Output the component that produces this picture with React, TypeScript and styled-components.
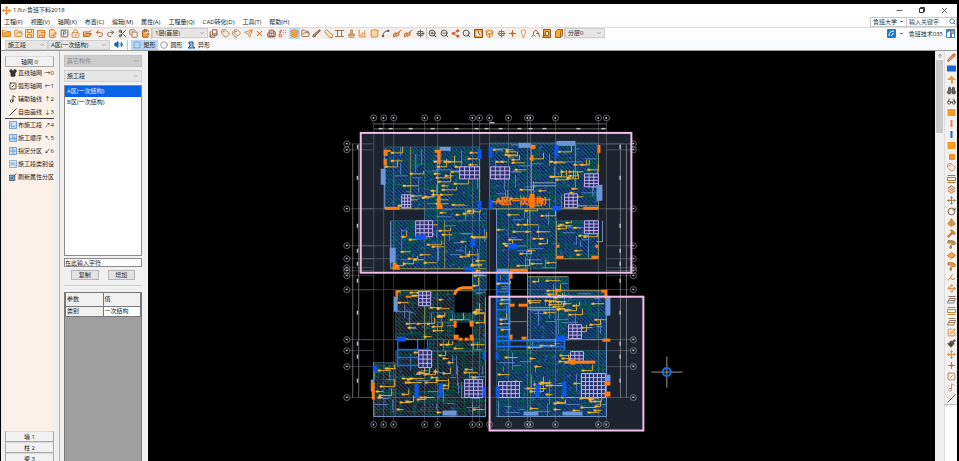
import React from "react";
import styled, { createGlobalStyle, css } from "styled-components";
import {
  Folder, FolderOpen, Save, FilePenLine, SquareParking, LockKeyhole, Brush, Undo2, Redo2, Scissors, Copy,
  ClipboardPaste, BookCopy, Tag, Tags, Send, X, Building2, Replace, Layers, Stamp, ChartColumnIncreasing,
  Cylinder, Spline, SquareDashed, ZoomIn, ZoomOut, Share2, Search, PackageOpen, Move,
  Lightbulb, Frame, Binoculars, Glasses, Settings, RotateCw, PaintRoller, Paintbrush,
  Pyramid, ArrowUp, Hammer, Waypoints, SquarePen, Slash, Volume2, Circle,
  Minus, ChevronDown, Pencil, Music2, SquareSlash, Shirt,
} from "lucide-react";

const Global = createGlobalStyle`
  * { box-sizing: border-box; }
  html, body { margin: 0; height: 100%; background: #000; overflow: hidden; }
  #root { height: 100vh; }
  body, button, input, select, table {
    font-family: "Open Sans", "Noto Sans CJK SC", sans-serif;
    font-size: 6px; line-height: 8px; color: #222;
  }
  button, input, select { margin: 0; padding: 0; border: 0; background: none; border-radius: 0; }
`;

const Window = styled.div`
  display: flex; flex-direction: column; height: 100vh;
  padding: 4px 2px 0 1px; background: #000;
`;
const TitleBar = styled.header`
  display: flex; align-items: center; justify-content: space-between;
  height: 12px; flex: none; background: #fff; padding: 0 8px 0 1px;
`;
const Title = styled.h1`
  display: flex; align-items: center; gap: 2px; margin: 0;
  font-size: 6px; font-weight: 400; line-height: 10px;
`;
const WindowControls = styled.div`display: flex; gap: 14px;`;
const PlainButton = styled.button`display: flex; align-items: center; justify-content: center;`;
const MenuBar = styled.nav`
  display: flex; align-items: center; height: 11px; flex: none;
  background: #fdfdfe; padding-left: 3px; gap: 8px;
`;
const MenuItem = styled.button`white-space: nowrap;`;
const SearchBox = styled.form`
  display: flex; align-items: center; width: 87px; height: 10px; margin-left: auto;
  border: 1px solid #c8c8c8; background: #fff;
`;
const SearchScope = styled.button`
  display: flex; align-items: center; gap: 2px; width: 36px; padding-left: 2px;
  white-space: nowrap; border-right: 1px solid #c8c8c8;
`;
const SearchInput = styled.input`
  flex: 1; min-width: 0; padding-left: 2px; outline: 0; height: 8px;
  &::placeholder { color: #444; }
`;
const Strip = styled.div`
  display: flex; align-items: center; height: 12px; flex: none;
  background: #fdfdfe; border-top: 1px solid #dcdcdc;
`;
const ToolStrip = styled.div`
  display: flex; height: 12px; background: #f2efec; border-bottom: 1px solid #c9c9c9; align-items: center;
`;
const ToolGroup = styled.div<{ $width: number }>`
  display: flex; align-items: center; justify-content: space-around; width: ${p => p.$width}px; height: 11px;
  border-right: 1px solid #c4c4c4;
`;
const ToolButton = styled.button<{ $active?: boolean }>`
  display: flex; align-items: center; justify-content: center; width: 11px; height: 11px;
  ${p => p.$active && css`background: #b9d8f5;`}
`;
const Account = styled.div`
  display: flex; align-items: center; gap: 3px; margin-left: auto; padding-right: 2px; white-space: nowrap;
`;
const AccountName = styled.span`margin-left: 2px;`;
const OptionStrip = styled.div`
  display: flex; align-items: center; height: 12px; flex: none; padding-left: 4px;
  background: #f8fafd; border-bottom: 1px solid #9a9a9a;
`;
const SelectFrame = styled.label<{ $width?: number; $dim?: boolean; $tall?: boolean }>`
  position: relative; display: flex; align-items: center;
  width: ${p => (p.$width ? p.$width + "px" : "100%")}; height: ${p => (p.$tall ? 12 : 10)}px;
  border: 1px solid ${p => (p.$dim ? "#c4c4c4" : "#d0d0d0")};
  background: ${p => (p.$dim ? "#cccccc" : "#e6e6e6")};
  svg { position: absolute; right: 2px; pointer-events: none; }
  select {
    appearance: none; width: 100%; height: 8px; padding-left: 2px; outline: 0; opacity: 1;
    color: ${p => (p.$dim ? "#8c8c8c" : "#222")};
  }
`;
const ShapeButton = styled.button<{ $active?: boolean }>`
  display: flex; align-items: center; justify-content: center; gap: 2px; width: 27px; height: 10px; white-space: nowrap;
  background: ${p => (p.$active ? "#b7d6f5" : "transparent")};
`;
const VolumeButton = styled(PlainButton)`width: 18px; height: 10px; border-right: 1px solid #c4c4c4; margin-right: 3px;`;
const Body = styled.div`display: flex; flex: 1; min-height: 0; background: #f0f0f0;`;
const ToolTree = styled.aside`
  display: flex; flex-direction: column; width: 59px; flex: none; padding: 5px 5px 0 4px;
  border-right: 1px solid #b0b0b0; overflow: hidden;
`;
const GroupButton = styled.button`
  height: 11px; flex: none; border: 1px solid #a9a9a9; border-top-color: #d8d8d8; background: #f1f1f1;
`;
const TreeList = styled.ul`
  flex: 1; min-height: 0; list-style: none; margin: 0; padding: 0; background: #fcf1e8;
`;
const TreeItem = styled.li<{ $rule?: boolean }>`
  height: 13px; border-bottom: 1px solid ${p => (p.$rule ? "#444" : "transparent")};
`;
const TreeButton = styled.button`
  display: flex; align-items: center; gap: 1px; width: 100%; height: 12px; padding-left: 4px; white-space: nowrap;
  svg { flex: none; }
`;
const Shortcut = styled.span`margin-left: auto;`;
const GroupStack = styled.div`
  display: flex; flex-direction: column; height: 30px; overflow: hidden; flex: none;
`;
const Properties = styled.aside`
  display: flex; flex-direction: column; width: 88px; flex: none; padding: 4px 5px 0 4px;
  border-right: 1px solid #fafafa;
`;
const SelectStack = styled.div`display: flex; flex-direction: column; gap: 3px;`;
const ZoneList = styled.ul`
  list-style: none; margin: 3px 0 2px; padding: 0; height: 171px; flex: none; background: #fff; border: 1px solid #8a8a8a;
`;
const Zone = styled.li<{ $selected?: boolean }>`
  height: 11px; padding: 1px 2px;
  background: ${p => (p.$selected ? "#0a63e6" : "transparent")}; color: ${p => (p.$selected ? "#e6f0ff" : "#222")};
`;
const FilterInput = styled.input`
  height: 9px; width: 100%; border: 1px solid #8a8a8a; background: #fff; flex: none;
  &::placeholder { color: #222; }
`;
const Actions = styled.div`
  display: flex; gap: 9px; padding: 3px 7px 5px; border-bottom: 1px solid #cfcfcf;
`;
const ActionButton = styled.button`
  flex: 1; height: 10px; border: 1px solid #b5b5b5; background: #e3e3e3;
`;
const GridPanel = styled.div`
  flex: 1; margin-top: 6px; background: #9f9f9f; border: 1px solid #777; border-bottom: 0;
`;
const ParamTable = styled.table`
  width: 100%; border-collapse: collapse; table-layout: fixed;
  th, td { text-align: left; font-weight: 400; border: 1px solid #777; padding: 0 1px; background: #f0f0f0; }
  thead th { height: 13px; border-top: 0; }
  tbody td, tbody th { height: 10px; }
  td { background: #fff; }
`;
const Viewport = styled.main`
  flex: 1; min-width: 0; background: #000; overflow: hidden;
  svg { display: block; width: 100%; height: 100%; }
`;
const ScrollTrack = styled.div`
  width: 9px; flex: none; background: #efefef; display: flex; flex-direction: column; align-items: stretch;
`;
const ScrollArrow = styled(PlainButton)`height: 9px; flex: none;`;
const ScrollThumb = styled.div`height: 73px; background: #c9c9c9; margin: 0 1px;`;
const SideTools = styled.aside`
  display: flex; flex-direction: column; width: 13px; flex: none; background: #fff; border-left: 1px solid #ddd;
`;
const SideButtons = styled.div`
  display: flex; flex-direction: column; align-items: center; background: #f3f1ef; border-bottom: 1px solid #bbb; padding-top: 1px;
`;

type IconType = React.ComponentType<any>;
type Tool = [IconType, string, string, string?];
const O = "#d8852f", G = "#6d6259", K = "#4a4440", B = "#2f6fc0", F = "#f5a73c", N = "none";

/* Small pictograms on a 9-unit grid, painted with a stroke and an optional fill. */
const glyph = (lines: string, solid?: string): IconType => ({ size = 9, color, fill }: any) => (
  <svg width={size} height={size} viewBox="0 0 9 9" fill="none">
    {solid && <path d={solid} fill={fill === N ? color : fill} />}
    <path d={lines} stroke={color} />
  </svg>
);
const FullFolder = glyph("M0.5 7.5V1.5H3.5L4.5 2.5H8.5V7.5Z", "M0.5 7.5V3H8.5V7.5Z");
const Disk = glyph("M0.5 0.5H8.5V8.5H0.5ZM2.5 8V5.5H6.5V8M2.5 1V3.5H6.5V1", "M0.5 0.5H8.5V8.5H0.5Z");
const DiskArrow = glyph("M0.5 1.5H7.5V8.5H0.5ZM2.5 8V6H5.5V8M4 3.5H8.5M6.5 1.5L8.5 3.5L6.5 5.5", "M0.5 1.5H7.5V8.5H0.5Z");
const FolderBrush = glyph("M0.5 7.5V3H6L8.5 1.5M0.5 7.5H6.5L8.5 4.5H2.5Z", "M0.5 7.5H6.5L8.5 4.5H2.5Z");
const IBeam = glyph("M0 1.5H9M0 7.5H9M2.5 1.5V7.5M6.5 1.5V7.5");
const DiagonalBar = glyph("M0.5 2.5L2.5 0.5L8.5 6L8.5 8.5L5.5 8.5Z", "M1 2.5L2.5 1L8 6V8H5.5Z");
const JoinBar = glyph("M0.5 8V5L3 3.5V6.5ZM3 5L6 3V6L3 7.5M5.5 3L8.5 1", "M0.5 8V5L6 3V6Z");
const Cross = glyph("M4.5 0.5V8.5M0.5 4.5H8.5M2 2.5H7V6.5H2Z");
const Spark = glyph("M4.5 1V8M1 4.5H8", "M4.5 2.5L6.5 4.5L4.5 6.5L2.5 4.5Z");
const Fit = glyph("M0.5 0.5H8.5V8.5H0.5ZM4.5 2V4L6 6", "M0.5 0.5H8.5V8.5H0.5ZM4.5 2A2.5 2.5 0 1 0 4.5 7A2.5 2.5 0 1 0 4.5 2Z");
const Crane = glyph("M0.5 8L2.5 5.5L4.5 7.5M2.5 5.5V3L5 1L7.5 4L8.5 8M5 4.5H8");
const PlanFrame = glyph("M1.5 0.5H8.5V8.5H1.5ZM0 8.5L3 6M3.5 2.5H6.5V6.5H3.5Z", "M1.5 0.5H8.5V8.5H1.5ZM3.5 2.5V6.5H6.5V2.5Z");
const Cube = glyph("M1.5 2.5L3.5 0.5H8.5V6.5L6.5 8.5H1.5ZM6.5 2.5V8.5M6.5 2.5L8.5 0.5", "M1.5 2.5L3.5 0.5H8.5V6.5L6.5 8.5H1.5Z");
const LongSheet = glyph("M0.5 1.5H8.5M0.5 3.5H8.5V6.5H0.5ZM0.5 8.5H8.5");
const SlantSheet = glyph("M1.5 1.5H8.5M2.5 3.5H8.5L6.5 8H0.5ZM1.5 5.5H7.5");
const FlagArrow = glyph("M1 7.5L3.5 4.5L5 6.5L8 5.5M3.5 4.5L5.5 1.5");
const Donut = glyph("M0.5 4.5L4.5 1.5L8.5 4.5L4.5 7.5Z", "M1 4.5L4.5 2L8 4.5L4.5 7Z");
const FlatBlue = glyph("M0 0", "M0 1.5H9V7.5H0Z");
const Block = glyph("M0 0", "M0.5 1H8.5V8H0.5Z");
const SmallBlock = glyph("M0 0", "M2 2H8V8H2Z");
const Bar = glyph("M0 0", "M3.5 1H5.5V8H3.5Z");
const RoofArrow = glyph("M0 0", "M0 5L4.5 0.5L9 5H6V8.5H4V5Z");
const TileEdge = glyph("M0.5 0.5H8.5V8.5H0.5ZM2.5 2.5V6.5H7", "M0.5 0.5H8.5V8.5H0.5Z");
const TileOrder = glyph("M0.5 0.5H8.5V8.5H0.5ZM4.5 1V5.5M1 5.5H8M6.5 3V7", "M0.5 0.5H8.5V8.5H0.5Z");
const TileSplit = glyph("M0.5 0.5H8.5V8.5H0.5ZM4.5 1V8M1 4.5H8", "M0.5 0.5H8.5V8.5H0.5Z");
const TileType = glyph("M0.5 0.5H8.5V8.5H0.5ZM2.5 6V3L4.5 5.5V2.5M6.5 3V7", "M0.5 0.5H8.5V8.5H0.5Z");
const BoxPen = glyph("M0.5 2.5H6.5V8.5H0.5ZM3 6L8.5 0.5M2.5 4.5V6.5H5", "M0.5 2.5H6.5V8.5H0.5Z");

const fileTools: Tool[] = [
  [FullFolder, "新建", O, F], [FolderOpen, "打开", O, "#fde0b8"], [Disk, "保存", O, "#fbdcb0"], [DiskArrow, "另存为", O, "#f9cd92"], [FilePenLine, "编辑", "#c46f22", "#fbdcb0"],
  [SquareParking, "打印", G], [LockKeyhole, "锁定", O], [FolderBrush, "格式", "#bb6b28", F], [Undo2, "撤销", "#b5622a"], [Redo2, "恢复", G],
  [Scissors, "剪切", K], [Copy, "复制", "#a06c3c"], [ClipboardPaste, "粘贴", "#8d4c18", F],
];
const editTools: Tool[] = [
  [BookCopy, "属性", "#87472c"], [Tag, "标注", "#a87445"], [Tags, "批量标注", "#a87445"], [Send, "定位", O], [X, "删除", "#bd5a28"],
  [Building2, "楼层", "#874a31"], [Replace, "替换", "#b8653a"], [Layers, "构件", O, F], [FolderOpen, "图层", "#96683c"], [Brush, "刷新", G, O],
  [DiagonalBar, "斜梁", O, "#fbe0bd"], [IBeam, "框架", "#9c7350"], [Stamp, "支座", "#b87a45", "#e5bd90"], [ChartColumnIncreasing, "图表", O], [Cylinder, "柱", O, "#f6d3a5"],
  [Spline, "偏移", K], [JoinBar, "延伸", "#c4703a", "#f0b98c"], [JoinBar, "修剪", "#c4703a", "#f0b98c"], [Cross, "平移", G],
];
const viewTools: Tool[] = [
  [ZoomIn, "放大", K], [ZoomOut, "缩小", K], [Share2, "动态", "#c25a2f", "#df7340"], [Search, "窗口", K], [Fit, "全部", "#85511d", F],
  [PackageOpen, "转换", O], [Cross, "网格", "#9d7048"], [Spark, "移动", "#c56b2d"], [Lightbulb, "显示", "#d9953d"],
  [Crane, "路径", "#a3604a"], [PlanFrame, "平面", "#8a5a20", F], [Cube, "三维", "#a8681a", "#f9ac23"],
];
const sideTools: Tool[] = [
  [Pencil, "绘制", "#b3532c", "#e9a27b"], [FlatBlue, "板", "#1f64d6"], [RoofArrow, "屋面", "#ef9b3d"], [Binoculars, "查找", K, "#777"], [Glasses, "查看", K],
  [Block, "墙", "#f59b20"], [Bar, "钢筋", "#ec7f5a"], [Bar, "纵筋", "#2867ae"], [Block, "梁", "#f59b20"], [SmallBlock, "柱", "#ef9425"], [Tag, "标签", "#b58450"],
  [LongSheet, "列表", "#a9783e"], [Settings, "设置", "#a86836"], [Move, "移动", "#a5764d"], [RotateCw, "旋转", "#675034"], [Pyramid, "镜像", O, "#ca9c63"],
  [Hammer, "锤", "#ae762c", O], [PaintRoller, "刷", "#8f7240", "#c4a05c"], [Donut, "节点", "#b86d22", F], [PaintRoller, "填充", "#b86d22", F], [FlagArrow, "曲线", "#c4703a"],
  [Waypoints, "折线", O], [SlantSheet, "表格", "#8d766c"], [LongSheet, "明细", "#c88938"], [SlantSheet, "报表", "#a07a5f"], [SquarePen, "修改", O],
  [Paintbrush, "涂刷", G, K], [Move, "拖动", O], [Spark, "平移", "#9b8268"], [SquareSlash, "分割", "#b97b42"], [Music2, "引线", "#b99a75"], [Slash, "直线", K],
];

const ToolIcons = ({ tools, active }: { tools: Tool[]; active?: number }) => (
  <>
    {tools.map(([Icon, label, color, fill], i) => (
      <ToolButton key={label} type="button" aria-label={label} $active={i === active}>
        <Icon size={9} color={color} fill={fill || N} strokeWidth={2.4} />
      </ToolButton>
    ))}
  </>
);

type DropdownProps = { label: string; value: string; width?: number; dim?: boolean; tall?: boolean };
const Dropdown = ({ label, value, width, dim, tall }: DropdownProps) => (
  <SelectFrame $width={width} $dim={dim} $tall={tall}>
    <select aria-label={label} disabled={dim} defaultValue={value}><option>{value}</option></select>
    <ChevronDown size={6} color="#777" />
  </SelectFrame>
);

const menus = ["工程(F)", "视图(V)", "轴网(X)", "布置(C)", "编辑(M)", "属性(A)", "工程量(Q)", "CAD转化(D)", "工具(T)", "帮助(H)"];
const treeItems: [IconType, string, string, string, string?][] = [
  [Shirt, "直线轴网", "→0", "#333", "#333"], [SquareSlash, "弧形轴网", "←1", "#333"], [Music2, "辅助轴线", "↑2", "#333"], [Slash, "自由画线", "↓3", "#111"],
  [TileEdge, "布施工段", "↗4", "#5d97cf", "#c6e2f8"], [TileOrder, "施工顺序", "↖5", "#5d97cf", "#c6e2f8"], [TileSplit, "指定分区", "↙6", "#5d97cf", "#c6e2f8"],
  [TileType, "施工段类别设", "", "#82a9c9", "#d8e8f4"], [BoxPen, "刷新属性分区", "", "#39597c", "#8fb8e0"],
];

/* ---- floor plan ---- */

type Rect = [number, number, number, number];
const axesX = [374, 384, 394, 425, 438, 473, 480, 490, 509, 528, 531, 556, 599, 607];
const axesY = [144, 150, 209, 246, 259, 268, 271, 276, 290, 340, 351, 367, 398];

const upper: Rect[] = [
  [385, 147, 95, 62], [391, 221, 96, 48], [425, 209, 62, 12], [473, 264, 14, 27], [490, 143, 109, 66],
  [497, 209, 60, 60], [557, 221, 42, 38],
];
const lowerLeft: Rect[] = [[396, 291, 59, 49], [473, 291, 13, 60], [430, 313, 45, 10], [430, 340, 56, 12], [396, 351, 90, 66], [374, 363, 22, 54]];
const lowerRight: Rect[] = [[528, 277, 41, 64], [557, 291, 50, 49], [497, 270, 14, 80], [497, 351, 110, 66], [527, 340, 38, 11]];
const allRooms = [...upper, ...lowerLeft, ...lowerRight];

function random(seed: number) {
  let s = seed;
  return () => {
    s = (s * 1664525 + 1013904223) % 4294967296;
    return s / 4294967296;
  };
}

const outlinePath = (rects: Rect[]) => rects.map(([x, y, w, h]) => `M${x} ${y}h${w}v${h}h${-w}z`).join("");

function buildDetail() {
  const rnd = random(2018);
  const int = (n: number) => Math.floor(rnd() * n);
  let beams = "", teal = "", pale = "", yellow = "", dots = "", blueDots = "";
  for (const [x, y, w, h] of allRooms) {
    for (let px = x + 4; px < x + w; px += 9 + int(8)) beams += `M${px} ${y}v${h}`;
    for (let py = y + 4; py < y + h; py += 9 + int(7)) beams += `M${x} ${py}h${w}`;
    const count = Math.ceil((w * h) / 125);
    for (let i = 0; i < count; i++) {
      const px = x + int(Math.max(1, w - 6)), py = y + int(h);
      const room = x + w - px;
      teal += `M${px} ${py}h${Math.min(room, 8 + int(14))}`;
      const qy = y + int(Math.max(1, h - 8));
      teal += `M${x + int(w)} ${qy}v${Math.min(y + h - qy, 6 + int(12))}`;
      if (i % 4 === 0) {
        const vy = y + int(Math.max(1, h - 8));
        pale += `M${x + int(w)} ${vy}v${Math.min(y + h - vy, 5 + int(16))}`;
        pale += `M${px} ${y + int(h)}h${Math.min(room, 5 + int(12))}`;
      }
      blueDots += `M${x + int(w)} ${y + int(h)}h2v2h-2z`;
    }
    for (let i = 0; i < Math.ceil((w * h) / 180); i++) {
      const px = x + 1 + int(Math.max(1, w - 9)), py = y + 2 + int(Math.max(1, h - 4));
      const len = Math.min(x + w - px, 4 + int(11));
      yellow += `M${px} ${py}h${len}`;
      dots += `M${px - 1} ${py - 1}h3v2h-3z`;
      if (i % 3 === 0) yellow += `M${px + len} ${py}v${-Math.min(py - y, 3 + int(6))}`;
    }
  }
  return { beams, teal, pale, yellow, dots, blueDots };
}
const detail = buildDetail();

const stairs: [number, number, number, number, number, number][] = [
  [460, 167, 20, 12, 4, 3], [402, 195, 9, 13, 3, 4], [416, 221, 17, 16, 4, 4], [491, 167, 19, 12, 4, 3], [585, 174, 14, 13, 3, 4],
  [565, 194, 13, 14, 3, 4], [585, 221, 14, 13, 3, 4], [419, 292, 12, 14, 3, 4], [419, 351, 13, 17, 3, 4], [465, 380, 18, 18, 4, 5],
  [569, 325, 13, 14, 3, 4], [571, 352, 13, 11, 3, 3], [582, 374, 24, 24, 6, 6], [499, 382, 21, 16, 5, 4],
];
const stairPath = stairs.map(([x, y, w, h, nx, ny]) => {
  let d = "";
  for (let i = 0; i <= nx; i++) d += `M${x + (w * i) / nx} ${y}v${h}`;
  for (let i = 0; i <= ny; i++) d += `M${x} ${y + (h * i) / ny}h${w}`;
  return d;
}).join("");

const orange: Rect[] = [
  [384, 150, 4, 6], [386, 150, 5, 2], [384, 159, 3, 6], [435, 150, 6, 3], [438, 150, 3, 14], [385, 207, 15, 3], [438, 195, 3, 14], [437, 205, 6, 4],
  [393, 263, 4, 6], [393, 267, 7, 3], [531, 145, 5, 4], [531, 155, 3, 6], [598, 145, 3, 8], [584, 207, 15, 3], [530, 194, 5, 14],
  [557, 256, 7, 3], [592, 256, 7, 3], [557, 245, 3, 3], [596, 245, 3, 3], [510, 269, 18, 3], [510, 271, 3, 8],
  [396, 291, 5, 2], [396, 291, 2, 6], [406, 296, 6, 2], [454, 321, 3, 7], [470, 321, 4, 6], [454, 335, 5, 5], [459, 338, 4, 3], [465, 338, 4, 3], [470, 335, 4, 6],
  [372, 383, 3, 17], [510, 304, 5, 3], [519, 304, 9, 3], [510, 335, 3, 5], [522, 337, 5, 3], [556, 290, 6, 2], [556, 290, 2, 6], [602, 290, 6, 3], [605, 293, 3, 6],
  [603, 339, 8, 3], [567, 361, 29, 3], [571, 360, 5, 5], [605, 382, 6, 4], [605, 392, 6, 5],
];
const blue: Rect[] = [
  [478, 149, 4, 10], [478, 201, 4, 9], [489, 147, 4, 11], [489, 200, 4, 9], [555, 145, 4, 12], [553, 206, 8, 5], [416, 235, 10, 5], [471, 239, 5, 8],
  [509, 244, 9, 5], [465, 267, 9, 4], [397, 337, 9, 5], [415, 384, 4, 14], [439, 384, 4, 14], [483, 352, 3, 8], [483, 387, 3, 11], [373, 366, 4, 6],
  [536, 384, 4, 14], [563, 382, 4, 16], [557, 336, 9, 5], [496, 352, 3, 8], [496, 387, 4, 11],
];
const pale: Rect[] = [
  [381, 169, 5, 16], [440, 147, 11, 4], [390, 248, 6, 15], [519, 143, 12, 5], [557, 141, 19, 5], [597, 185, 6, 16],
  [394, 297, 4, 15], [371, 380, 3, 12], [443, 411, 14, 5], [606, 297, 5, 19], [524, 412, 15, 4], [563, 412, 20, 4], [606, 375, 5, 7], [497, 269, 12, 4],
];
const openings: Rect[] = [[455, 291, 18, 22], [456, 323, 16, 15], [399, 341, 18, 9], [511, 272, 16, 25], [511, 307, 16, 14], [511, 323, 16, 14], [566, 341, 40, 9]];

const FloorPlan = () => (
  <svg viewBox="148 51 788 410" preserveAspectRatio="xMidYMin meet" role="img" aria-label="施工段平面图">
    <defs>
      <pattern id="hatchBlue" width="4" height="4" patternUnits="userSpaceOnUse">
        <rect width="4" height="4" fill="#08162b" />
        <path d="M-1 -1L5 5M-1 3L1 5M3 -1L5 1" stroke="#235cb0" strokeWidth="1.4" />
      </pattern>
      <pattern id="hatchGrey" width="4" height="4" patternUnits="userSpaceOnUse">
        <rect width="4" height="4" fill="#06090d" />
        <path d="M-1 -1L5 5M-1 3L1 5M3 -1L5 1" stroke="#4a5674" strokeWidth="1.1" />
      </pattern>
    </defs>
    <rect x="361" y="133" width="271" height="139" fill="#1c222e" />
    <rect x="490" y="297" width="154" height="134" fill="#1c222e" />

    <path d={outlinePath(upper)} fill="url(#hatchBlue)" />
    <path d={outlinePath(lowerRight)} fill="url(#hatchBlue)" />
    <path d={outlinePath(lowerLeft)} fill="url(#hatchGrey)" />

    <path d={detail.beams} stroke="#064e40" fill="none" strokeWidth="1.4" opacity=".7" />
    <path d={detail.teal} stroke="#0a6252" fill="none" strokeDasharray="3 1" opacity=".8" />
    <path d={detail.pale} stroke="#658ed0" fill="none" opacity=".8" />
    <path d={detail.blueDots} fill="#276fd0" opacity=".6" />
    <path d={outlinePath(allRooms)} stroke="#2c6578" fill="none" opacity=".7" />

    {openings.map(([x, y, w, h]) => (
      <rect key={`${x}-${y}`} x={x} y={y} width={w} height={h} fill={x < 490 || y < 297 ? "#020304" : "#1c222e"} />
    ))}

    <g stroke="#a8adb2" opacity=".48" strokeWidth="0.7">
      {axesX.map(x => <path key={x} d={`M${x} 121V422`} />)}
      {axesY.map(y => <path key={y} d={`M350 ${y}H374M607 ${y}H631`} />)}
      <path d="M361 209H625M361 259H399M361 340H399M361 398H610M361 246H394M361 290H610M480 144H625" />
    </g>
    <g stroke="#bfc2c5" strokeWidth="0.7" opacity=".75">
      <path d="M374 124H607M374 129H607M353 144V398M359 144V398M621 144V398M627 144V398" />
    </g>
    <g stroke="#8f9397" strokeWidth="0.7" fill="none">
      {axesX.map(x => <React.Fragment key={x}><circle cx={x} cy="118" r="3" /><circle cx={x} cy="425" r="3" /></React.Fragment>)}
      {axesY.map(y => <React.Fragment key={y}><circle cx="347" cy={y} r="3" /><circle cx="634" cy={y} r="3" /></React.Fragment>)}
    </g>
    <g fill="#b9bdc2">
      {[381, 391, 411, 433, 457, 477, 487, 501, 520, 531, 545, 579, 604].map(x => <rect key={x} x={x - 2} y="128" width="4" height="1.5" />)}
      {[147, 178, 226, 251, 264, 281, 313, 344, 357, 381].map(y => (
        <React.Fragment key={y}><rect x="357" y={y - 2} width="1.5" height="4" /><rect x="620" y={y - 2} width="1.5" height="4" /></React.Fragment>
      ))}
      {axesX.map(x => <React.Fragment key={x}><rect x={x - 1} y="117" width="1.5" height="2" /><rect x={x - 1} y="424" width="1.5" height="2" /></React.Fragment>)}
      {axesY.map(y => <React.Fragment key={y}><rect x="346" y={y - 1} width="2" height="1.5" /><rect x="633" y={y - 1} width="2" height="1.5" /></React.Fragment>)}
      <rect x="490" y="122" width="5" height="1.5" />
    </g>

    <path d="M497 270V350M509 270V350M497 341H565M497 347H565M565 340V351M497 283H510M497 292H510M497 301H510M497 310H510M497 319H510M497 328H510M497 337H510" stroke="#206fe0" strokeWidth="1.6" fill="none" />
    <path d="M398 340V368M418 340V352M398 350H430M398 358H430M398 366H420M428 340V351" stroke="#176be0" strokeWidth="1.5" fill="none" />
    <path d="M533 183H557M533 186H557M528 308H556M528 310H556" stroke="#8fa5b4" fill="none" />
    <path d="M385 209H425M391 269H487M490 209H599M557 259H599M528 270V340M510 272V338M510 322H528M528 277H569M557 291H607M527 340H607M438 150V209M411 147V209M480 158V202M532 148V207M576 145V190M599 153V209M396 291H473M425 291V340M396 340H425M497 398H607M374 417V363M445 221V269M557 221V259M599 221V259" stroke="#a39a4c" fill="none" strokeWidth="0.8" />
    <path d="M374 417H486M497 417H607M607 297V417M486 297V417M603 221V242H597M497 209V269M385 156V209M391 221V269" stroke="#6f94c4" fill="none" />

    <path d={detail.yellow} stroke="#e8b42e" fill="none" strokeWidth="0.9" />
    <path d={detail.dots} fill="#f9b63a" />
    {stairs.map(([x, y, w, h]) => <rect key={`${x}-${y}`} x={x} y={y} width={w} height={h} fill="#27336b" />)}
    <path d={stairPath} stroke="#c7b3f0" fill="none" />
    {pale.map(([x, y, w, h]) => <rect key={`${x}-${y}`} x={x} y={y} width={w} height={h} fill="#6b95d8" />)}
    {blue.map(([x, y, w, h]) => <rect key={`${x}-${y}`} x={x} y={y} width={w} height={h} fill="#0b56f0" />)}
    {orange.map(([x, y, w, h]) => <rect key={`${x}-${y}-${w}`} x={x} y={y} width={w} height={h} fill="#ff7d12" />)}
    <path d="M455 295Q456 289 463 288H473" stroke="#ff861f" strokeWidth="3" fill="none" />
    <text x="496" y="204" fill="#ff760e" stroke="#ff760e" strokeWidth="0.5" fontSize="8" fontWeight="700" fontFamily='"Noto Sans CJK SC", sans-serif'>A区(一次结构)</text>

    <g fill="none" stroke="#f3bfe9" strokeWidth="2">
      <rect x="361" y="133" width="271" height="140" />
      <rect x="490" y="297" width="154" height="134" />
    </g>
    <path d="M652 372.5H683M667.5 357V388" stroke="#9b9b93" />
    <circle cx="667.5" cy="372.5" r="4" stroke="#1672dc" strokeWidth="2" fill="none" />
  </svg>
);

export default function App() {
  return (
    <Window lang="zh-CN">
      <Global />
      <TitleBar>
        <Title><Move size={9} color="#ef8c35" strokeWidth={3} />1.ftz-鲁班下料2018</Title>
        <WindowControls>
          <PlainButton type="button" aria-label="最小化"><Minus size={9} color="#333" /></PlainButton>
          <PlainButton type="button" aria-label="还原">
            <svg width="8" height="8" viewBox="0 0 8 8"><path d="M1.5 2.5H5.5V6.5H1.5ZM2.5 2V1.5H6.5V5.5H6" stroke="#333" fill="none" /></svg>
          </PlainButton>
          <PlainButton type="button" aria-label="关闭"><X size={9} color="#333" /></PlainButton>
        </WindowControls>
      </TitleBar>
      <MenuBar>
        {menus.map(m => <MenuItem key={m} type="button">{m}</MenuItem>)}
        <SearchBox onSubmit={e => e.preventDefault()}>
          <SearchScope type="button">鲁班大学 <ChevronDown size={5} fill="#444" /></SearchScope>
          <SearchInput aria-label="输入关键字" placeholder="输入关键字" />
          <PlainButton type="submit" aria-label="搜索"><Search size={7} color="#4c7187" strokeWidth={3} /></PlainButton>
        </SearchBox>
      </MenuBar>
      <Strip>
        <ToolStrip>
          <ToolGroup $width={151}><ToolIcons tools={fileTools} /></ToolGroup>
          <Dropdown label="楼层" value="1层(首层)" width={56} />
          <ToolGroup $width={219}><ToolIcons tools={editTools} active={7} /></ToolGroup>
          <ToolGroup $width={138}><ToolIcons tools={viewTools} /></ToolGroup>
          <Dropdown label="分层" value="分层0" width={40} />
        </ToolStrip>
        <Account>
          <svg width="9" height="9" viewBox="0 0 9 9"><rect width="9" height="9" rx="1" fill="#1d78d2" /><path d="M2 7Q2 2 7 2M4 7Q6 6 6 4" stroke="#fff" fill="none" /></svg>
          <ChevronDown size={5} fill="#555" />
          <AccountName>鲁班技术035</AccountName>
          <svg width="9" height="9" viewBox="0 0 9 9"><rect width="9" height="9" fill="#4582bd" /><path d="M1 8V4L4 2V8ZM6 8V5H8V8Z" fill="#fff" /><circle cx="6.5" cy="3" r="1.5" fill="#f09d4b" /></svg>
        </Account>
      </Strip>
      <OptionStrip>
        <Dropdown label="构件" value="施工段" width={43} />
        <Dropdown label="分区" value="A区(一次结构)" width={62} />
        <VolumeButton type="button" aria-label="提示"><Volume2 size={9} color="#1b5fae" fill="#1b5fae" /></VolumeButton>
        <ShapeButton type="button" $active><SquareDashed size={8} color="#2e70b8" />矩形</ShapeButton>
        <ShapeButton type="button"><Circle size={8} color="#777" />圆形</ShapeButton>
        <ShapeButton type="button">
          <svg width="9" height="8" viewBox="0 0 9 8"><path d="M1 7H8L6 5V1H2V3H3V5Z" fill="#8cbbed" stroke="#24558e" /></svg>异形
        </ShapeButton>
      </OptionStrip>
      <Body>
        <ToolTree>
          <GroupButton type="button">轴网 0</GroupButton>
          <TreeList>
            {treeItems.map(([Icon, name, key, color, fill], i) => (
              <TreeItem key={name} $rule={i === 3}>
                <TreeButton type="button"><Icon size={8} color={color} fill={fill || N} strokeWidth={2.5} />{name}{key && <Shortcut>{key}</Shortcut>}</TreeButton>
              </TreeItem>
            ))}
          </TreeList>
          <GroupStack>
            <GroupButton type="button">墙 1</GroupButton>
            <GroupButton type="button">柱 2</GroupButton>
            <GroupButton type="button">梁 3</GroupButton>
          </GroupStack>
        </ToolTree>
        <Properties>
          <SelectStack>
            <Dropdown label="构件类型" value="其它构件" dim tall />
            <Dropdown label="构件名称" value="施工段" tall />
          </SelectStack>
          <ZoneList>
            <Zone $selected>A区(一次结构)</Zone>
            <Zone>B区(一次结构)</Zone>
          </ZoneList>
          <FilterInput aria-label="在此输入字符" placeholder="在此输入字符" />
          <Actions>
            <ActionButton type="button">复制</ActionButton>
            <ActionButton type="button">增加</ActionButton>
          </Actions>
          <GridPanel>
            <ParamTable>
              <thead><tr><th scope="col">参数</th><th scope="col">值</th></tr></thead>
              <tbody><tr><th scope="row">类别</th><td>一次结构</td></tr></tbody>
            </ParamTable>
          </GridPanel>
        </Properties>
        <Viewport><FloorPlan /></Viewport>
        <ScrollTrack>
          <ScrollArrow type="button" aria-label="向上滚动"><ArrowUp size={6} color="#555" /></ScrollArrow>
          <ScrollThumb />
        </ScrollTrack>
        <SideTools>
          <SideButtons><ToolIconsColumn /></SideButtons>
        </SideTools>
      </Body>
    </Window>
  );
}

function ToolIconsColumn() {
  return <ToolIcons tools={sideTools} />;
}
